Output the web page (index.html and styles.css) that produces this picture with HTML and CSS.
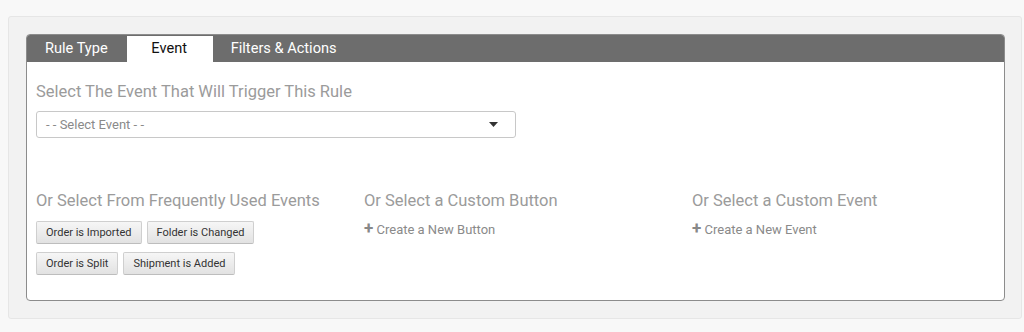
FILE: index.html
```html
<!DOCTYPE html>
<html lang="en">
<head>
  <meta charset="UTF-8" />
  <title>Rule Editor</title>
  <meta name="viewport" content="width=device-width, initial-scale=1.0" />
  <link rel="stylesheet" href="styles.css">
</head>
<body>

  <div class="panel">
    <div class="card">
      <div class="tabs">
        <div class="tab">Rule Type</div>
        <div class="tab active">Event</div>
        <div class="tab">Filters &amp; Actions</div>
      </div>

      <div class="content">
        <h2>Select The Event That Will Trigger This Rule</h2>
        <div class="select">
          <span>- - Select Event - -</span>
          <svg class="caret" width="9" height="5" viewBox="0 0 9 5"><path d="M0 0 L9 0 L4.5 5 Z" fill="#333"/></svg>
        </div>

        <div class="columns">
          <div class="col">
            <h2>Or Select From Frequently Used Events</h2>
            <div class="buttons">
              <button>Order is Imported</button>
              <button>Folder is Changed</button>
            </div>
            <div class="buttons">
              <button>Order is Split</button>
              <button>Shipment is Added</button>
            </div>
          </div>
          <div class="col">
            <h2>Or Select a Custom Button</h2>
            <a class="create" href="#"><span class="plus">+</span> Create a New Button</a>
          </div>
          <div class="col">
            <h2>Or Select a Custom Event</h2>
            <a class="create" href="#"><span class="plus">+</span> Create a New Event</a>
          </div>
        </div>
      </div>
    </div>
  </div>

</body>
</html>
```

FILE: styles.css
```css
body {
  font-family: Roboto, 'Liberation Sans', sans-serif;
  background: #f8f8f8;
  margin: 0;
  padding: 16px 2px 0 8px;
}

.panel {
  background: #f2f2f2;
  border: 1px solid #e6e6e6;
  border-radius: 3px;
  padding: 17px 16px 17px 17px;
}

.card {
  background: #fff;
  border: 1px solid #8c8c8c;
  border-radius: 4px;
  overflow: hidden;
}

.tabs {
  display: flex;
  align-items: flex-end;
  background: #6d6d6d;
  height: 27px;
}

.tab {
  color: #fff;
  font-size: 14.6px;
  min-width: 86px;
  padding: 0 19px 0 18px;
  box-sizing: border-box;
  text-align: center;
  height: 26px;
  line-height: 25px;
}

.tab.active {
  background: #fff;
  color: #111;
}

.content {
  padding: 20px 10px 25px 9px;
}

h2 {
  font-size: 16.5px;
  font-weight: 400;
  line-height: 20px;
  color: #9b9b9b;
  margin: 0;
}

.select {
  width: 480px;
  height: 27px;
  margin-top: 9px;
  border: 1px solid #c8c8c8;
  border-radius: 3px;
  box-sizing: border-box;
  display: flex;
  align-items: center;
  justify-content: space-between;
  padding: 0 17px 0 9px;
  font-size: 13px;
  color: #8a8a8a;
}

.columns {
  display: grid;
  grid-template-columns: 328px 328px 1fr;
  margin-top: 53px;
}

.buttons {
  display: flex;
  gap: 5px;
  margin-top: 10px;
}

.buttons + .buttons {
  margin-top: 8px;
}

button {
  font-family: Roboto, 'Liberation Sans', sans-serif;
  font-size: 11px;
  color: #333;
  height: 23px;
  padding: 0 9px;
  background: linear-gradient(#f6f6f6, #e2e2e2);
  border: 1px solid #cfcfcf;
  border-bottom-color: #bdbdbd;
  border-radius: 2px;
}

.create {
  display: block;
  margin-top: 9px;
  font-size: 13px;
  line-height: 16px;
  color: #8a8a8a;
  text-decoration: none;
}

.plus {
  font-size: 17px;
  font-weight: 700;
  color: #888;
}
```
